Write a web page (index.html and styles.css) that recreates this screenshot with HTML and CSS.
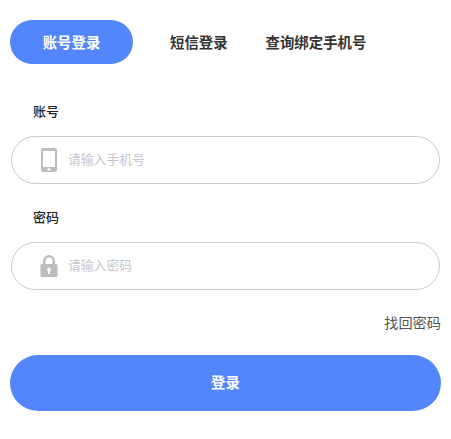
FILE: index.html
```html
<!DOCTYPE html>
<html lang="zh-CN">

<head>
  <meta charset="UTF-8">
  <meta name="viewport" content="width=device-width, initial-scale=1.0">
  <title>登录</title>
  <link rel="stylesheet" href="styles.css">
</head>

<body>
  <div class="login">
    <div class="tabs">
      <a class="tab active">账号登录</a>
      <a class="tab sms">短信登录</a>
      <a class="tab query">查询绑定手机号</a>
    </div>

    <div class="label first">账号</div>
    <div class="field">
      <svg class="icon" width="18" height="26" viewBox="0 0 18 26">
        <path fill="#bdbdbd" fill-rule="evenodd" d="M3 1h12a2 2 0 0 1 2 2v20a2 2 0 0 1-2 2H3a2 2 0 0 1-2-2V3a2 2 0 0 1 2-2zM3 4v16h12V4zM7.500 21.500v2h3v-2z"/>
      </svg>
      <span class="placeholder">请输入手机号</span>
    </div>

    <div class="label second">密码</div>
    <div class="field">
      <svg class="icon" width="18" height="26" viewBox="0 0 18 26">
        <path fill="#bdbdbd" fill-rule="evenodd" d="M3 11V8a6 6 0 0 1 12 0v3h1a1.500 1.500 0 0 1 1.500 1.500v10A1.500 1.500 0 0 1 16 24H2a1.500 1.500 0 0 1-1.500-1.500v-10A1.500 1.500 0 0 1 2 11zM5.500 11h7V8a3.500 3.500 0 0 0-7 0zM9 14.500a2 2 0 0 0-1 3.700V21h2v-2.800a2 2 0 0 0-1-3.700z"/>
      </svg>
      <span class="placeholder">请输入密码</span>
    </div>

    <div class="forget"><a>找回密码</a></div>
    <button class="btn">登录</button>
  </div>
</body>

</html>
```

FILE: styles.css
```css
* {
  margin: 0;
  padding: 0;
  box-sizing: border-box;
}

body {
  background: #fff;
  font-family: "Noto Sans CJK SC", "Liberation Sans", sans-serif;
  color: #333;
}

.login {
  width: 451px;
  padding: 20px 10px 0;
}

.tabs {
  display: flex;
  align-items: center;
  height: 44px;
}

.tab {
  font-size: 14.4px;
  font-weight: 700;
  line-height: 44px;
  color: #333;
}

.tab.active {
  width: 123px;
  height: 44px;
  border-radius: 22px;
  background: #5386fd;
  color: #fff;
  text-align: center;
}

.tab.sms {
  margin-left: 37px;
}

.tab.query {
  margin-left: 38px;
}

.label {
  padding-left: 23px;
  font-size: 13px;
  font-weight: 500;
  line-height: 20px;
  color: #222;
}

.label.first {
  margin-top: 37px;
}

.label.second {
  margin-top: 23px;
}

.field {
  display: flex;
  align-items: center;
  width: 429px;
  height: 48px;
  margin: 15px 0 0 1px;
  padding-left: 28px;
  border: 1px solid #cbcbcb;
  border-radius: 24px;
}

.icon {
  flex: none;
}

.placeholder {
  margin-left: 10px;
  padding-bottom: 4px;
  font-size: 12.8px;
  color: #c4c7cf;
}

.forget {
  margin-top: 22px;
  text-align: right;
  font-size: 14.2px;
  line-height: 20px;
  color: #555;
}

.btn {
  display: block;
  width: 431px;
  height: 56px;
  margin-top: 23px;
  padding-bottom: 4px;
  border: none;
  border-radius: 28px;
  background: #5386fd;
  color: #fff;
  font-family: inherit;
  font-size: 14.4px;
  font-weight: 700;
}
```
